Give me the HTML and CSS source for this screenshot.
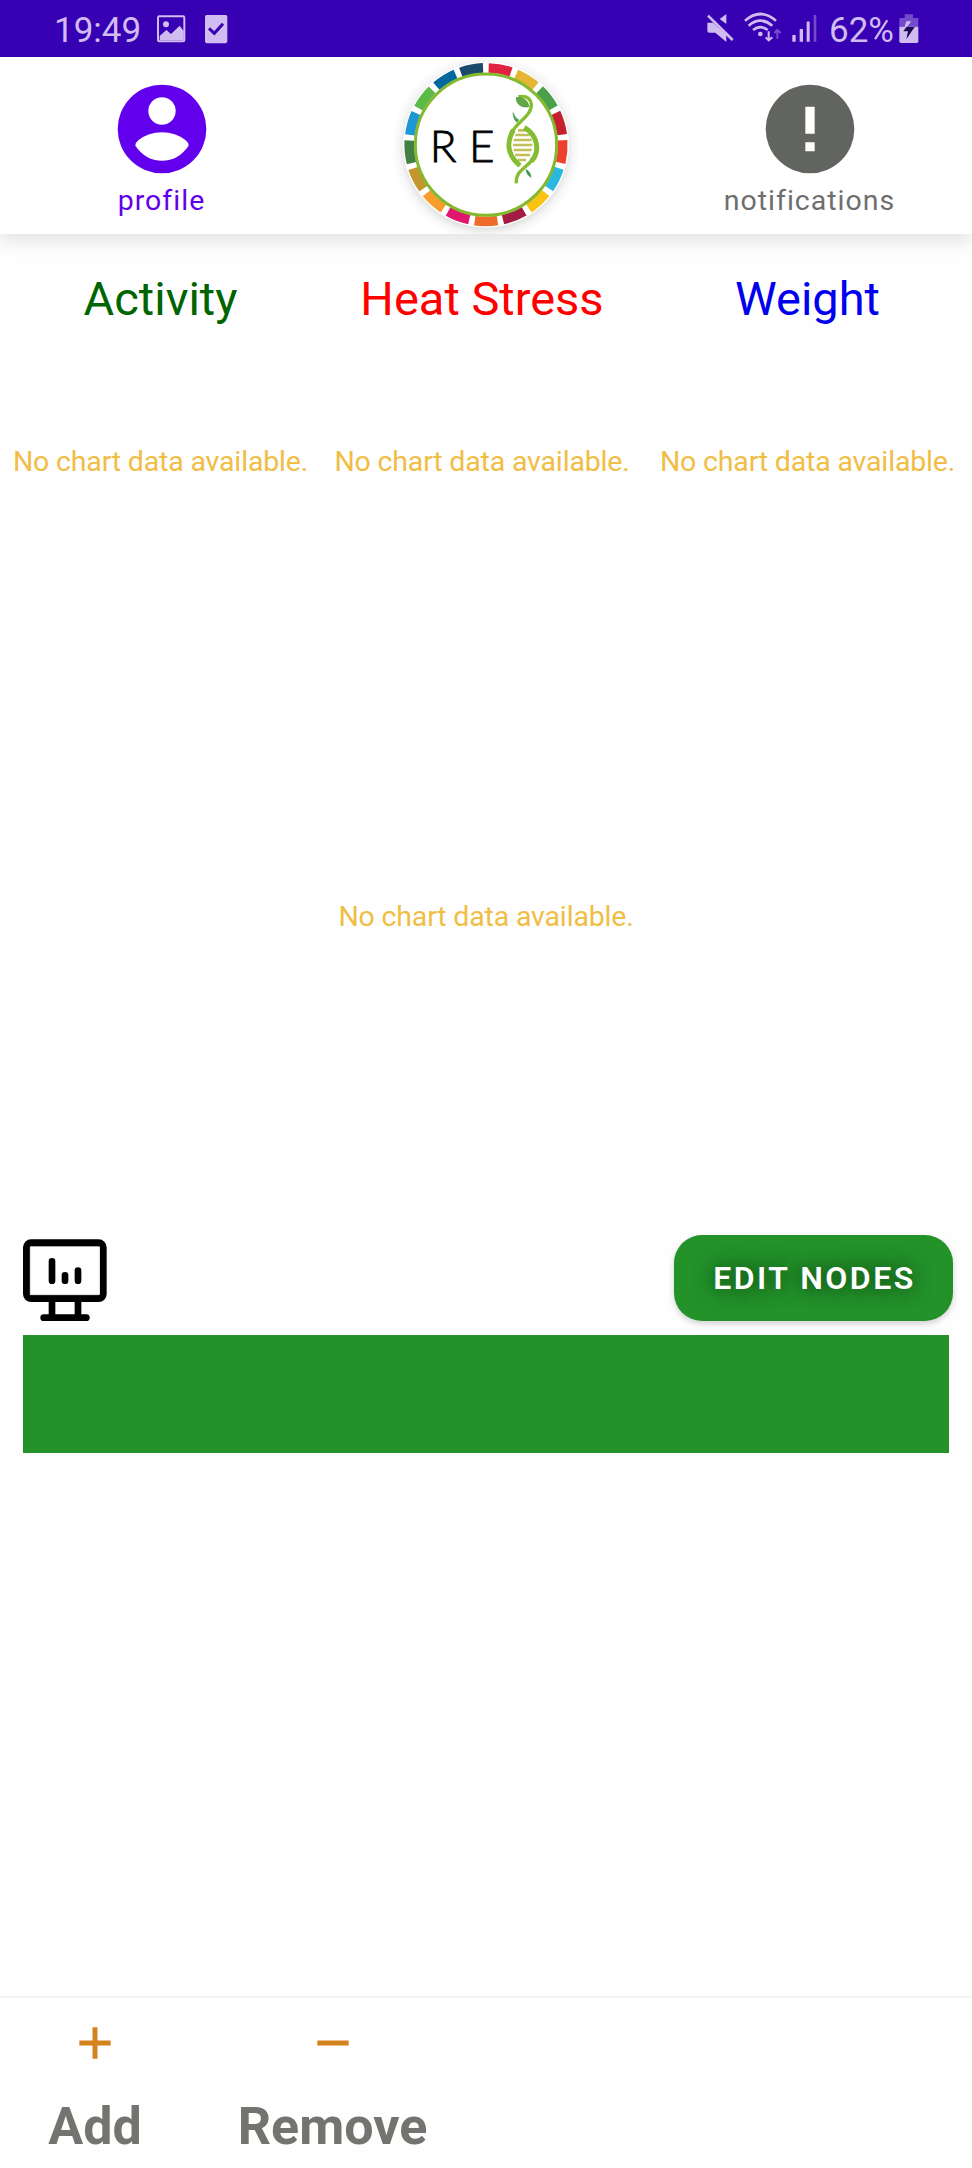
FILE: index.html
```html
<!DOCTYPE html>
<html lang="en">
<head>
<meta charset="utf-8">
<title>REX</title>
<link rel="stylesheet" href="styles.css">
</head>
<body>
<div class="statusbar">
  <span class="clock">19:49</span>
  <svg class="status-left" width="74" height="32" viewBox="0 0 222 96">
    <rect x="3" y="4" width="79" height="75" rx="4" fill="none" stroke="currentColor" stroke-width="6"/>
    <circle cx="27" cy="28" r="9" fill="currentColor"/>
    <path d="M8 63 28 45 42 57 68 32 80 48V76H8Z" fill="currentColor"/>
    <rect x="144" y="-1" width="67" height="86" rx="8" fill="currentColor"/>
    <path d="M156 40 172 55 198 26" fill="none" stroke="#3700b3" stroke-width="9"/>
  </svg>
  <svg class="status-right" width="112" height="32" viewBox="140 36 336 96">
    <g fill="currentColor">
      <path d="M141 68H158L198 104V126L165 98H147Q141 98 141 92ZM178 57 198 42V72Z"/>
      <circle cx="300" cy="102" r="7"/>
      <path d="M396 106q5-4 10 0v19h-10zM418 88q5-4 10 0v37h-10zM439 66q4-4 9 0v59h-9z"/>
      <path d="M460 46q4-3 8 0v79h-8z" opacity=".4"/>
    </g>
    <g fill="none" stroke="currentColor" stroke-width="8">
      <path d="M143 47 217 120"/>
      <path d="M254 62Q300 22 347 62M265 77Q300 47 336 77M278 90Q300 73 322 90"/>
      <path d="M325 94V121M316 112 325 121 336 112" stroke-width="6"/>
      <path d="M351 116V90M342 99 351 90 361 99" stroke-width="6" opacity=".4"/>
    </g>
  </svg>
  <span class="battery-text">62%</span>
  <svg class="battery" width="20" height="32" viewBox="716 36 60 96">
    <path d="M733 43H758V54H774V80H717V54H733Z" fill="currentColor" opacity=".4"/>
    <path d="M717 80H774V124Q774 129 769 129H722Q717 129 717 124Z" fill="currentColor"/>
    <path d="M738 64H753L729 94Z" fill="currentColor"/>
    <path d="M729 94 738 81H763L738 118 743 94Z" fill="#1b0a52"/>
  </svg>
</div>

<header class="topnav">
  <div class="tab tab-active">
    <svg class="tab-icon" width="90" height="90" viewBox="0 0 270 270">
      <circle cx="135" cy="135" r="133" fill="#6200ee"/>
      <circle cx="135" cy="81" r="41" fill="#fff"/>
      <path d="M55 185Q55 176 64 169Q94 145 135 145T206 169Q215 176 215 185Q184 230 135 230T55 185Z" fill="#fff"/>
    </svg>
    <span class="tab-label">profile</span>
  </div>
  <div class="logo">
    <svg width="190" height="177" viewBox="0 21 570 531">
      <defs>
        <radialGradient id="halo" gradientUnits="userSpaceOnUse" cx="288" cy="292" r="284">
          <stop offset=".84" stop-color="#000" stop-opacity=".13"/>
          <stop offset=".92" stop-color="#000" stop-opacity=".035"/>
          <stop offset="1" stop-color="#000" stop-opacity="0"/>
        </radialGradient>
        <path id="seg" d="M296 54A230 230 0 0 1 363 66"/>
      </defs>
      <circle cx="288" cy="292" r="284" fill="url(#halo)"/>
      <circle cx="288" cy="284" r="249" fill="#fff"/>
      <g fill="none" stroke-width="29">
        <use href="#seg" stroke="#e0213f"/>
        <use href="#seg" stroke="#e5b634" transform="rotate(21.18 288 284)"/>
        <use href="#seg" stroke="#4ba04b" transform="rotate(42.35 288 284)"/>
        <use href="#seg" stroke="#c5202f" transform="rotate(63.53 288 284)"/>
        <use href="#seg" stroke="#ef402b" transform="rotate(84.71 288 284)"/>
        <use href="#seg" stroke="#2bb8e0" transform="rotate(105.88 288 284)"/>
        <use href="#seg" stroke="#f8c313" transform="rotate(127.06 288 284)"/>
        <use href="#seg" stroke="#a31c44" transform="rotate(148.24 288 284)"/>
        <use href="#seg" stroke="#ef6b2a" transform="rotate(169.41 288 284)"/>
        <use href="#seg" stroke="#e0186d" transform="rotate(190.59 288 284)"/>
        <use href="#seg" stroke="#f99d2a" transform="rotate(211.76 288 284)"/>
        <use href="#seg" stroke="#c4962e" transform="rotate(232.94 288 284)"/>
        <use href="#seg" stroke="#417f45" transform="rotate(254.12 288 284)"/>
        <use href="#seg" stroke="#1e97d5" transform="rotate(275.29 288 284)"/>
        <use href="#seg" stroke="#5cba49" transform="rotate(296.47 288 284)"/>
        <use href="#seg" stroke="#05699f" transform="rotate(317.65 288 284)"/>
        <use href="#seg" stroke="#1b4a6c" transform="rotate(338.82 288 284)"/>
      </g>
      <circle cx="288" cy="284" r="212" fill="#fff" stroke="#84b92f" stroke-width="9"/>
      <text class="logo-text" x="119" y="335">R</text>
      <text class="logo-text" x="237" y="335">E</text>
      <g stroke="#c3bf58" stroke-width="8">
        <path d="M384 241H409M376 255H419M371 270H425M369 285H427M371 300H425M375 315H420M383 330H408"/>
      </g>
      <g fill="none" stroke="#86bc30">
        <path d="M385 140Q419 134 424 162C426 196 386 212 368 243" stroke-width="10"/>
        <path d="M370 240C350 275 350 315 390 347" stroke-width="15"/>
        <path d="M403 232C446 258 450 306 424 334" stroke-width="15"/>
        <path d="M426 330C406 358 376 362 379 400" stroke-width="10"/>
      </g>
      <path d="M379 143C391 142 414 145 416 170C397 174 378 164 379 143Z" fill="#62a843" stroke="#3b8f46" stroke-width="2"/>
      <path d="M369 188C371 202 374 214 382 216L386 209C376 205 374 196 369 188ZM408 358C415 362 423 370 423 382C413 376 409 369 408 358Z" fill="#459b4f" stroke="#459b4f" stroke-width="2"/>
    </svg>
  </div>
  <div class="tab">
    <svg class="tab-icon" width="90" height="90" viewBox="0 0 270 270">
      <circle cx="135" cy="135" r="133" fill="#62645f"/>
      <path d="M121 68H149V149H121ZM121 175H149V202H121Z" fill="#fff"/>
    </svg>
    <span class="tab-label">notifications</span>
  </div>
</header>

<main class="content">
  <section class="charts">
    <div class="chart"><h2 class="activity">Activity</h2><p class="empty">No chart data available.</p></div>
    <div class="chart"><h2 class="heat">Heat Stress</h2><p class="empty">No chart data available.</p></div>
    <div class="chart"><h2 class="weight">Weight</h2><p class="empty">No chart data available.</p></div>
  </section>
  <section class="main-chart"><p class="empty">No chart data available.</p></section>
  <section class="nodes">
    <div class="nodes-head">
      <svg class="monitor" width="84" height="83" viewBox="70 56 252 249">
        <g fill="none" stroke="#000" stroke-width="20">
          <rect x="80" y="67" width="231" height="168" rx="14"/>
          <path d="M157 238V290M235 238V290"/>
          <path d="M132 292H260" stroke-linecap="round"/>
          <path d="M157 123V181M196 165V181M235 151V181" stroke-linecap="round" stroke-width="20"/>
        </g>
        <path d="M90 77H302V225H90Z" fill="none" stroke="#000" stroke-width="2"/>
      </svg>
      <button class="edit">EDIT NODES</button>
    </div>
    <div class="node-panel"></div>
  </section>
</main>

<footer class="bottombar">
  <div class="action add">
    <svg width="32" height="32" viewBox="0 0 96 96"><path d="M1 48H95M48 1V95" stroke="#d4821e" stroke-width="15"/></svg>
    <span>Add</span>
  </div>
  <div class="action remove">
    <svg width="32" height="32" viewBox="0 0 96 96"><path d="M1 48H95" stroke="#d4821e" stroke-width="15"/></svg>
    <span>Remove</span>
  </div>
</footer>
</body>
</html>
```
FILE: styles.css
```css
* { box-sizing: border-box; }
html, body { margin: 0; height: 100%; }
body {
  display: flex;
  flex-direction: column;
  width: 972px;
  height: 2168px;
  background: #fefefe;
  font-family: Roboto, "Liberation Sans", sans-serif;
  overflow: hidden;
}
h2, p { margin: 0; font-weight: 400; }
svg { display: block; flex: none; }

.statusbar {
  flex: none;
  display: flex;
  height: 57px;
  padding: 0 53px 0 54px;
  background: #3700b3;
  color: #d0bcf0;
  font-size: 35px;
  line-height: 61px;
}
.status-left { margin: 15px 0 0 16px; }
.status-right { margin: 12px 10px 0 auto; }
.battery { margin: 12px 0 0 5px; }

.topnav {
  flex: none;
  display: grid;
  grid-template-columns: repeat(3, 1fr);
  height: 177px;
  background: #fff;
  box-shadow: 0 8px 16px rgba(0, 0, 0, .1);
}
.tab {
  display: flex;
  flex-direction: column;
  align-items: center;
  padding-top: 27px;
  color: #6e6e6e;
}
.tab-active { color: #6200ee; }
.tab-label {
  margin: 10px 1px 0 0;
  font-size: 28.500px;
  line-height: 34px;
  letter-spacing: 1px;
}
.logo { padding-left: 66px; }
.logo-text {
  font-family: Lato, sans-serif;
  font-size: 132px;
  font-weight: 300;
  fill: #000;
  stroke: #000;
  stroke-width: 2.500px;
}

.content { flex: 1; }
.charts {
  display: grid;
  grid-template-columns: 321px 322px 329px;
  height: 483px;
  padding-top: 37px;
}
.chart {
  display: flex;
  flex-direction: column;
  align-items: center;
}
.chart h2 { font-size: 47px; line-height: 56px; }
.activity { color: #006400; }
.heat { color: #f00; }
.weight { color: #00e; }
.empty {
  color: #f0bd45;
  font-size: 28.500px;
  line-height: 34px;
  letter-spacing: -.17px;
}
.chart .empty { margin-top: 118px; }
.main-chart {
  display: flex;
  justify-content: center;
  height: 518px;
  padding-top: 183px;
}
.nodes { padding: 0 19px 0 23px; }
.nodes-head { display: flex; justify-content: space-between; height: 100px; }
.monitor { margin-top: 4px; }
.edit {
  width: 279px;
  height: 86px;
  padding: 0 0 0 2px;
  border: 0;
  border-radius: 28px;
  background: #229229;
  box-shadow: 0 3px 6px rgba(0, 0, 0, .18);
  color: #fff;
  font: 600 32px/87px Roboto, "Liberation Sans", sans-serif;
  letter-spacing: 2.500px;
  text-shadow: 0 0 20px #000b;
}
.node-panel {
  width: 926px;
  height: 118px;
  background: #229229;
}

.bottombar {
  flex: none;
  display: flex;
  height: 172px;
  border-top: 2px solid #f5f5f5;
}
.action {
  display: flex;
  flex-direction: column;
  align-items: center;
  padding-top: 29px;
  color: #72746f;
  font-size: 52px;
  font-weight: 700;
  line-height: 60px;
}
.action span { margin-top: 38px; }
.add { width: 190px; }
.remove { width: 285px; }
```
